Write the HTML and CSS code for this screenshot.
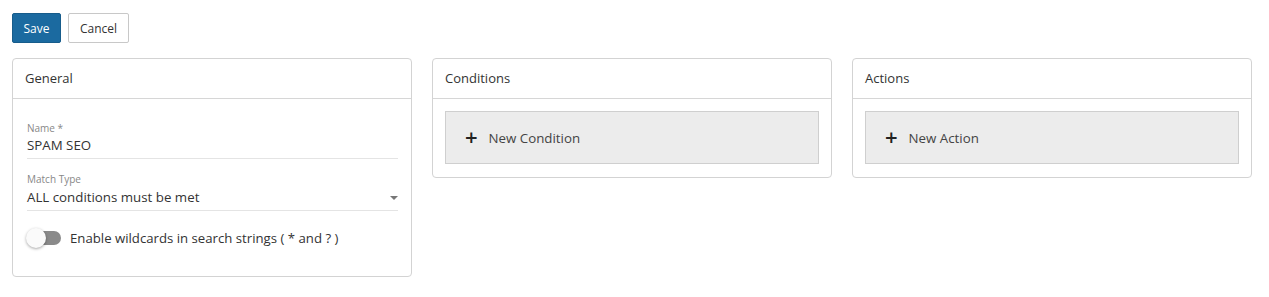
FILE: index.html
```html
<!DOCTYPE html>
<html>
<head>
<meta charset="utf-8">
<link rel="stylesheet" href="styles.css">
</head>
<body>
<div class="page">
  <div class="toolbar">
    <button class="btn btn-primary">Save</button>
    <button class="btn btn-default">Cancel</button>
  </div>
  <div class="cards">
    <div class="card">
      <div class="card-head">General</div>
      <div class="card-body general">
        <div class="field">
          <div class="field-label">Name *</div>
          <div class="field-value">SPAM SEO</div>
        </div>
        <div class="field">
          <div class="field-label">Match Type</div>
          <div class="field-value select">ALL conditions must be met<span class="caret"></span></div>
        </div>
        <div class="toggle-row">
          <span class="toggle"><span class="knob"></span></span>
          <span class="toggle-text">Enable wildcards in search strings ( * and ? )</span>
        </div>
      </div>
    </div>
    <div class="card">
      <div class="card-head">Conditions</div>
      <div class="card-body">
        <div class="add-btn"><span class="plus">+</span>New Condition</div>
      </div>
    </div>
    <div class="card">
      <div class="card-head">Actions</div>
      <div class="card-body">
        <div class="add-btn"><span class="plus">+</span>New Action</div>
      </div>
    </div>
  </div>
</div>
</body>
</html>
```
FILE: styles.css
```css
* { box-sizing: border-box; }
body {
  margin: 0;
  background: #fff;
  font-family: "Open Sans", "Noto Sans", sans-serif;
  font-size: 13px;
  color: #333;
}
.page { padding: 13px 12px; }
.toolbar { display: flex; gap: 7px; }
.btn {
  height: 30px;
  font-family: inherit;
  font-size: 12px;
  border-radius: 2px;
  padding: 0 10px;
  cursor: pointer;
}
.btn-primary {
  width: 49px;
  background: #1b6aa0;
  border: 1px solid #175c8b;
  color: #fff;
}
.btn-default {
  width: 61px;
  background: #fff;
  border: 1px solid #c8c8c8;
  color: #333;
}
.cards {
  display: flex;
  align-items: flex-start;
  gap: 20px;
  margin-top: 15px;
}
.card {
  width: 400px;
  border: 1px solid #d3d3d3;
  border-radius: 4px;
  background: #fff;
}
.card-head {
  height: 40px;
  line-height: 38px;
  padding: 0 12px;
  border-bottom: 1px solid #d6d6d6;
  font-size: 13px;
  color: #333;
}
.card-body { padding: 12px 12px 13px; }
.general { padding: 23px 13px 27px 14px; }
.field { border-bottom: 1px solid #e4e4e4; margin-bottom: 14px; padding-bottom: 3px; }
.field + .field .field-label { margin-bottom: 1px; }
.field-label { font-size: 10px; color: #888; line-height: 13px; }
.field-value { font-size: 13.3px; color: #333; line-height: 20px; position: relative; }
.caret {
  position: absolute;
  right: 0px;
  top: 9px;
  width: 0; height: 0;
  border-left: 4px solid transparent;
  border-right: 4px solid transparent;
  border-top: 4px solid #777;
}
.toggle-row {
  display: flex;
  align-items: center;
  gap: 9px;
  margin-top: 16px;
  height: 22px;
}
.toggle {
  position: relative;
  width: 34px;
  height: 22px;
  display: inline-block;
}
.toggle::before {
  content: "";
  position: absolute;
  left: 2px; right: 0;
  top: 4px; height: 14px;
  border-radius: 7px;
  background: #8a8a8a;
}
.knob {
  position: absolute;
  left: -1px; top: 1px;
  width: 20px; height: 20px;
  border-radius: 50%;
  background: #fafafa;
  box-shadow: 0 1px 3px rgba(0,0,0,0.35);
}
.toggle-text { font-size: 13.2px; color: #333; }
.add-btn {
  height: 53px;
  background: #ececec;
  border: 1px solid #cfcfcf;
  display: flex;
  align-items: center;
  padding-left: 19px;
  font-size: 13.3px;
  color: #444;
}
.plus {
  font-size: 22px;
  font-weight: 600;
  color: #222;
  margin-right: 11px;
  line-height: 1;
  margin-top: -3px;
}
```
